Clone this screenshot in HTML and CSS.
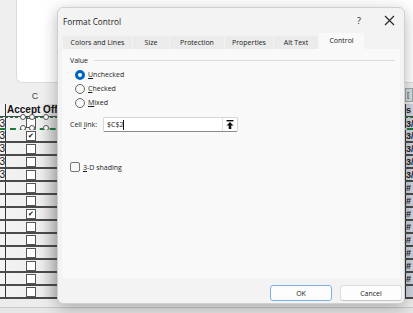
FILE: index.html
```html
<!DOCTYPE html>
<html lang="en">
<head>
  <meta charset="UTF-8">
  <title>Format Control</title>
  <link rel="stylesheet" href="styles.css">
</head>
<body>
  <div class="sheet">
    <div class="pane-area">
      <div class="pane"></div>
    </div>
    <div class="col-headers">
      <div class="colhdr-a"></div>
      <div class="colhdr-c">C</div>
      <div class="colhdr-fill"></div>
      <div class="colhdr-z">[</div>
    </div>

    <div class="grid">
      <div class="row head">
        <div class="cell a"></div>
        <div class="cell c"><span class="hdr-text">Accept Offe</span></div>
        <div class="cell fill"></div>
        <div class="cell z">s</div>
      </div>
      <div class="row marquee">
        <div class="cell a">3</div>
        <div class="cell c"><span class="box"></span></div>
        <div class="cell fill"></div>
        <div class="cell z">3/</div>
        <span class="handle" style="left:20px;top:-4px"></span>
        <span class="handle" style="left:29px;top:-4px"></span>
        <span class="handle" style="left:43px;top:-4px"></span>
        <span class="handle" style="left:20px;top:7px"></span>
        <span class="handle" style="left:29px;top:7px"></span>
        <span class="handle" style="left:43px;top:7px"></span>
      </div>
      <div class="row">
        <div class="cell a">3</div>
        <div class="cell c"><span class="box checked">&#10004;</span></div>
        <div class="cell fill"></div>
        <div class="cell z">3/</div>
      </div>
      <div class="row">
        <div class="cell a">3</div>
        <div class="cell c"><span class="box"></span></div>
        <div class="cell fill"></div>
        <div class="cell z">3/</div>
      </div>
      <div class="row">
        <div class="cell a">3</div>
        <div class="cell c"><span class="box"></span></div>
        <div class="cell fill"></div>
        <div class="cell z">3/</div>
      </div>
      <div class="row">
        <div class="cell a">3</div>
        <div class="cell c"><span class="box"></span></div>
        <div class="cell fill"></div>
        <div class="cell z">3/</div>
      </div>
      <div class="row">
        <div class="cell a"></div>
        <div class="cell c"><span class="box"></span></div>
        <div class="cell fill"></div>
        <div class="cell z">#</div>
      </div>
      <div class="row">
        <div class="cell a"></div>
        <div class="cell c"><span class="box"></span></div>
        <div class="cell fill"></div>
        <div class="cell z">#</div>
      </div>
      <div class="row">
        <div class="cell a"></div>
        <div class="cell c"><span class="box checked">&#10004;</span></div>
        <div class="cell fill"></div>
        <div class="cell z">#</div>
      </div>
      <div class="row">
        <div class="cell a"></div>
        <div class="cell c"><span class="box"></span></div>
        <div class="cell fill"></div>
        <div class="cell z">#</div>
      </div>
      <div class="row">
        <div class="cell a"></div>
        <div class="cell c"><span class="box"></span></div>
        <div class="cell fill"></div>
        <div class="cell z">#</div>
      </div>
      <div class="row">
        <div class="cell a"></div>
        <div class="cell c"><span class="box"></span></div>
        <div class="cell fill"></div>
        <div class="cell z">#</div>
      </div>
      <div class="row">
        <div class="cell a"></div>
        <div class="cell c"><span class="box"></span></div>
        <div class="cell fill"></div>
        <div class="cell z">#</div>
      </div>
      <div class="row">
        <div class="cell a"></div>
        <div class="cell c"><span class="box"></span></div>
        <div class="cell fill"></div>
        <div class="cell z">#</div>
      </div>
      <div class="row">
        <div class="cell a"></div>
        <div class="cell c"><span class="box"></span></div>
        <div class="cell fill"></div>
        <div class="cell z"></div>
      </div>
    </div>
    <div class="statusbar"></div>
  </div>

  <div class="dialog">
    <div class="titlebar">
      <span class="title">Format Control</span>
      <span class="help">?</span>
      <span class="close">
        <svg width="11" height="11" viewBox="0 0 11 11"><path d="M1 1L10 10M10 1L1 10" stroke="#222" stroke-width="1.1" fill="none"/></svg>
      </span>
    </div>

    <div class="tabs">
      <div class="tab" style="width:69px">Colors and Lines</div>
      <div class="tab" style="width:36px">Size</div>
      <div class="tab" style="width:54px">Protection</div>
      <div class="tab" style="width:48px">Properties</div>
      <div class="tab" style="width:44px">Alt Text</div>
      <div class="tab active" style="width:45px">Control</div>
    </div>

    <div class="panel">
      <div class="group-title"><span>Value</span><div class="group-line"></div></div>

      <div class="radios">
        <label class="radio-row"><span class="radio on"></span><span><u>U</u>nchecked</span></label>
        <label class="radio-row"><span class="radio"></span><span><u>C</u>hecked</span></label>
        <label class="radio-row"><span class="radio"></span><span><u>M</u>ixed</span></label>
      </div>

      <div class="link-row">
        <span class="link-label">Cell <u>l</u>ink:</span>
        <div class="link-input">
          <span class="link-value">$C$2<span class="caret"></span></span>
          <span class="link-btn">
            <svg width="8" height="9" viewBox="0 0 8 9"><rect x="0.5" y="0" width="7" height="1.4" fill="#111"/><path d="M4 2L7.5 5.5H5.3V9H2.7V5.5H0.5Z" fill="#111"/></svg>
          </span>
        </div>
      </div>

      <label class="shade-row"><span class="chk"></span><span><u>3</u>-D shading</span></label>
    </div>

    <div class="footer">
      <button class="btn primary">OK</button>
      <button class="btn">Cancel</button>
    </div>
  </div>
</body>
</html>
```

FILE: styles.css
```css
* {
  margin: 0;
  padding: 0;
  box-sizing: border-box;
}

body {
  width: 413px;
  height: 313px;
  overflow: hidden;
  background-color: #ececec;
  font-family: "Open Sans", "Noto Sans", Arial, sans-serif;
  color: #1b1b1b;
  position: relative;
}

/* Spreadsheet behind the dialog */
.sheet {
  display: flex;
  flex-direction: column;
  height: 313px;
}

.pane-area {
  height: 85px;
  flex-shrink: 0;
  padding-left: 16px;
  background-color: #efefef;
}

.pane {
  height: 83px;
  background-color: #fff;
  border: 1px solid #dcdcdc;
  border-top: none;
  border-right: none;
  border-bottom-left-radius: 6px;
}

.col-headers {
  display: flex;
  flex-shrink: 0;
  height: 19px;
  background-color: #efefef;
  font-family: "Liberation Sans", Arial, sans-serif;
  font-size: 9px;
  color: #444;
  align-items: center;
}

.colhdr-a {
  width: 6px;
}

.colhdr-c {
  width: 58px;
  text-align: center;
  padding-top: 2px;
}

.colhdr-fill {
  flex: 1;
}

.colhdr-z {
  width: 8px;
  height: 14px;
  background-color: #d6dbe3;
  border: 1px solid #9aa;
  font-size: 8px;
  line-height: 12px;
  padding-left: 1px;
}

.grid {
  display: flex;
  flex-direction: column;
  height: 203px;
  flex-shrink: 0;
  overflow: hidden;
}

.row {
  display: flex;
  flex-shrink: 0;
  height: 13px;
  position: relative;
  border-bottom: 2px solid #4a4a4a;
  background: linear-gradient(90deg, #f3f3f3 0, #eeeeee 40px, #c9c9c9 57px);
}

.row.head {
  border-bottom: 1px solid #4a4a4a;
}

.cell {
  height: 100%;
  overflow: hidden;
  white-space: nowrap;
  font-family: "Liberation Sans", Arial, sans-serif;
  font-size: 10px;
  line-height: 12px;
}

.cell.a {
  width: 6px;
  border-right: 1px solid #333;
  text-align: right;
  text-indent: -3px;
  color: #111;
}

.cell.c {
  width: 50px;
  display: flex;
  justify-content: center;
  align-items: center;
}

.head .cell.c {
  overflow: visible;
  justify-content: flex-start;
}

.hdr-text {
  font-weight: bold;
  font-size: 10px;
  color: #111;
  padding-left: 1px;
}

.cell.fill {
  flex: 1;
}

.cell.z {
  width: 8px;
  background-color: #cdd5e0;
  border-left: 1px solid #333;
  font-size: 9px;
  font-weight: bold;
  color: #222;
}

.box {
  width: 10px;
  height: 10px;
  border: 1px solid #555;
  background-color: #fff;
  font-size: 7px;
  line-height: 8px;
  text-align: center;
  color: #111;
}

.marquee {
  border-top: 1px dashed #1f7a3a;
  border-bottom: 2px dashed #1f7a3a;
}

.handle {
  position: absolute;
  width: 6px;
  height: 6px;
  border-radius: 50%;
  border: 1px solid #555;
  background-color: #fff;
}

.statusbar {
  flex: 1;
  background-color: #e6e6e6;
  border-top: 1px solid #c9c9c9;
}

/* Dialog window (floats over the sheet) */
.dialog {
  position: absolute;
  left: 57px;
  top: 7px;
  width: 348px;
  height: 297px;
  background-color: #f3f3f3;
  border: 1px solid #d0d0d0;
  border-radius: 6px;
  box-shadow: 0 4px 16px rgba(0, 0, 0, 0.28);
  display: flex;
  flex-direction: column;
}

.titlebar {
  display: flex;
  align-items: center;
  height: 25px;
  padding-left: 5px;
}

.title {
  font-size: 8.2px;
  color: #1a1a1a;
  flex: 1;
  margin-top: 1px;
}

.help {
  font-size: 9px;
  width: 17px;
  color: #222;
}

.close {
  width: 30px;
  display: flex;
  align-items: center;
  justify-content: center;
}

.tabs {
  display: flex;
  align-items: flex-end;
  height: 16px;
  padding-left: 5px;
}

.tab {
  height: 13px;
  margin-right: 1px;
  background-color: #ebebeb;
  font-size: 7px;
  text-align: center;
  line-height: 13px;
  color: #222;
  white-space: nowrap;
}

.tab.active {
  height: 16px;
  line-height: 15px;
  background-color: #f9f9f9;
}

.panel {
  height: 229px;
  margin: 0 4px 0 4px;
  background-color: #f9f9f9;
  padding-left: 8px;
  padding-right: 5px;
}

.group-title {
  display: flex;
  align-items: center;
  margin-top: 7px;
  font-size: 7px;
  color: #222;
}

.group-line {
  flex: 1;
  height: 1px;
  margin-left: 6px;
  background-color: #dcdcdc;
}

.radios {
  display: flex;
  flex-direction: column;
  gap: 3px;
  margin-top: 4px;
  padding-left: 5px;
}

.radio-row {
  display: flex;
  align-items: center;
  gap: 3px;
  height: 11px;
  font-size: 7px;
}

.radio {
  width: 10px;
  height: 10px;
  border-radius: 50%;
  border: 1px solid #666;
  background-color: #f7f7f7;
}

.radio.on {
  border: 3px solid #0067c0;
  background-color: #fff;
}

.link-row {
  display: flex;
  align-items: center;
  margin-top: 9px;
  font-size: 7px;
}

.link-label {
  width: 33px;
}

.link-input {
  display: flex;
  width: 135px;
  height: 15px;
  background-color: #fff;
  border: 1px solid #d6d6d6;
  border-bottom-color: #8a8a8a;
  border-radius: 2px;
}

.link-value {
  flex: 1;
  padding-left: 3px;
  line-height: 13px;
  display: flex;
  align-items: center;
}

.caret {
  width: 1px;
  height: 10px;
  background-color: #111;
}

.link-btn {
  width: 15px;
  display: flex;
  align-items: center;
  justify-content: center;
  border-left: 1px solid #e2e2e2;
}

.shade-row {
  display: flex;
  align-items: center;
  gap: 3px;
  margin-top: 30px;
  font-size: 7px;
}

.chk {
  width: 10px;
  height: 10px;
  border: 1px solid #777;
  border-radius: 2px;
  background-color: #f7f7f7;
}

.footer {
  display: flex;
  justify-content: flex-end;
  gap: 8px;
  padding-top: 7px;
  padding-right: 2px;
}

.btn {
  width: 62px;
  height: 16px;
  font-family: "Open Sans", "Noto Sans", Arial, sans-serif;
  font-size: 7px;
  color: #222;
  background-color: #fdfdfd;
  border: 1px solid #dcdcdc;
  border-bottom-color: #c4c4c4;
  border-radius: 3px;
}

.btn.primary {
  border: 1px solid #7fb0e0;
}
```
